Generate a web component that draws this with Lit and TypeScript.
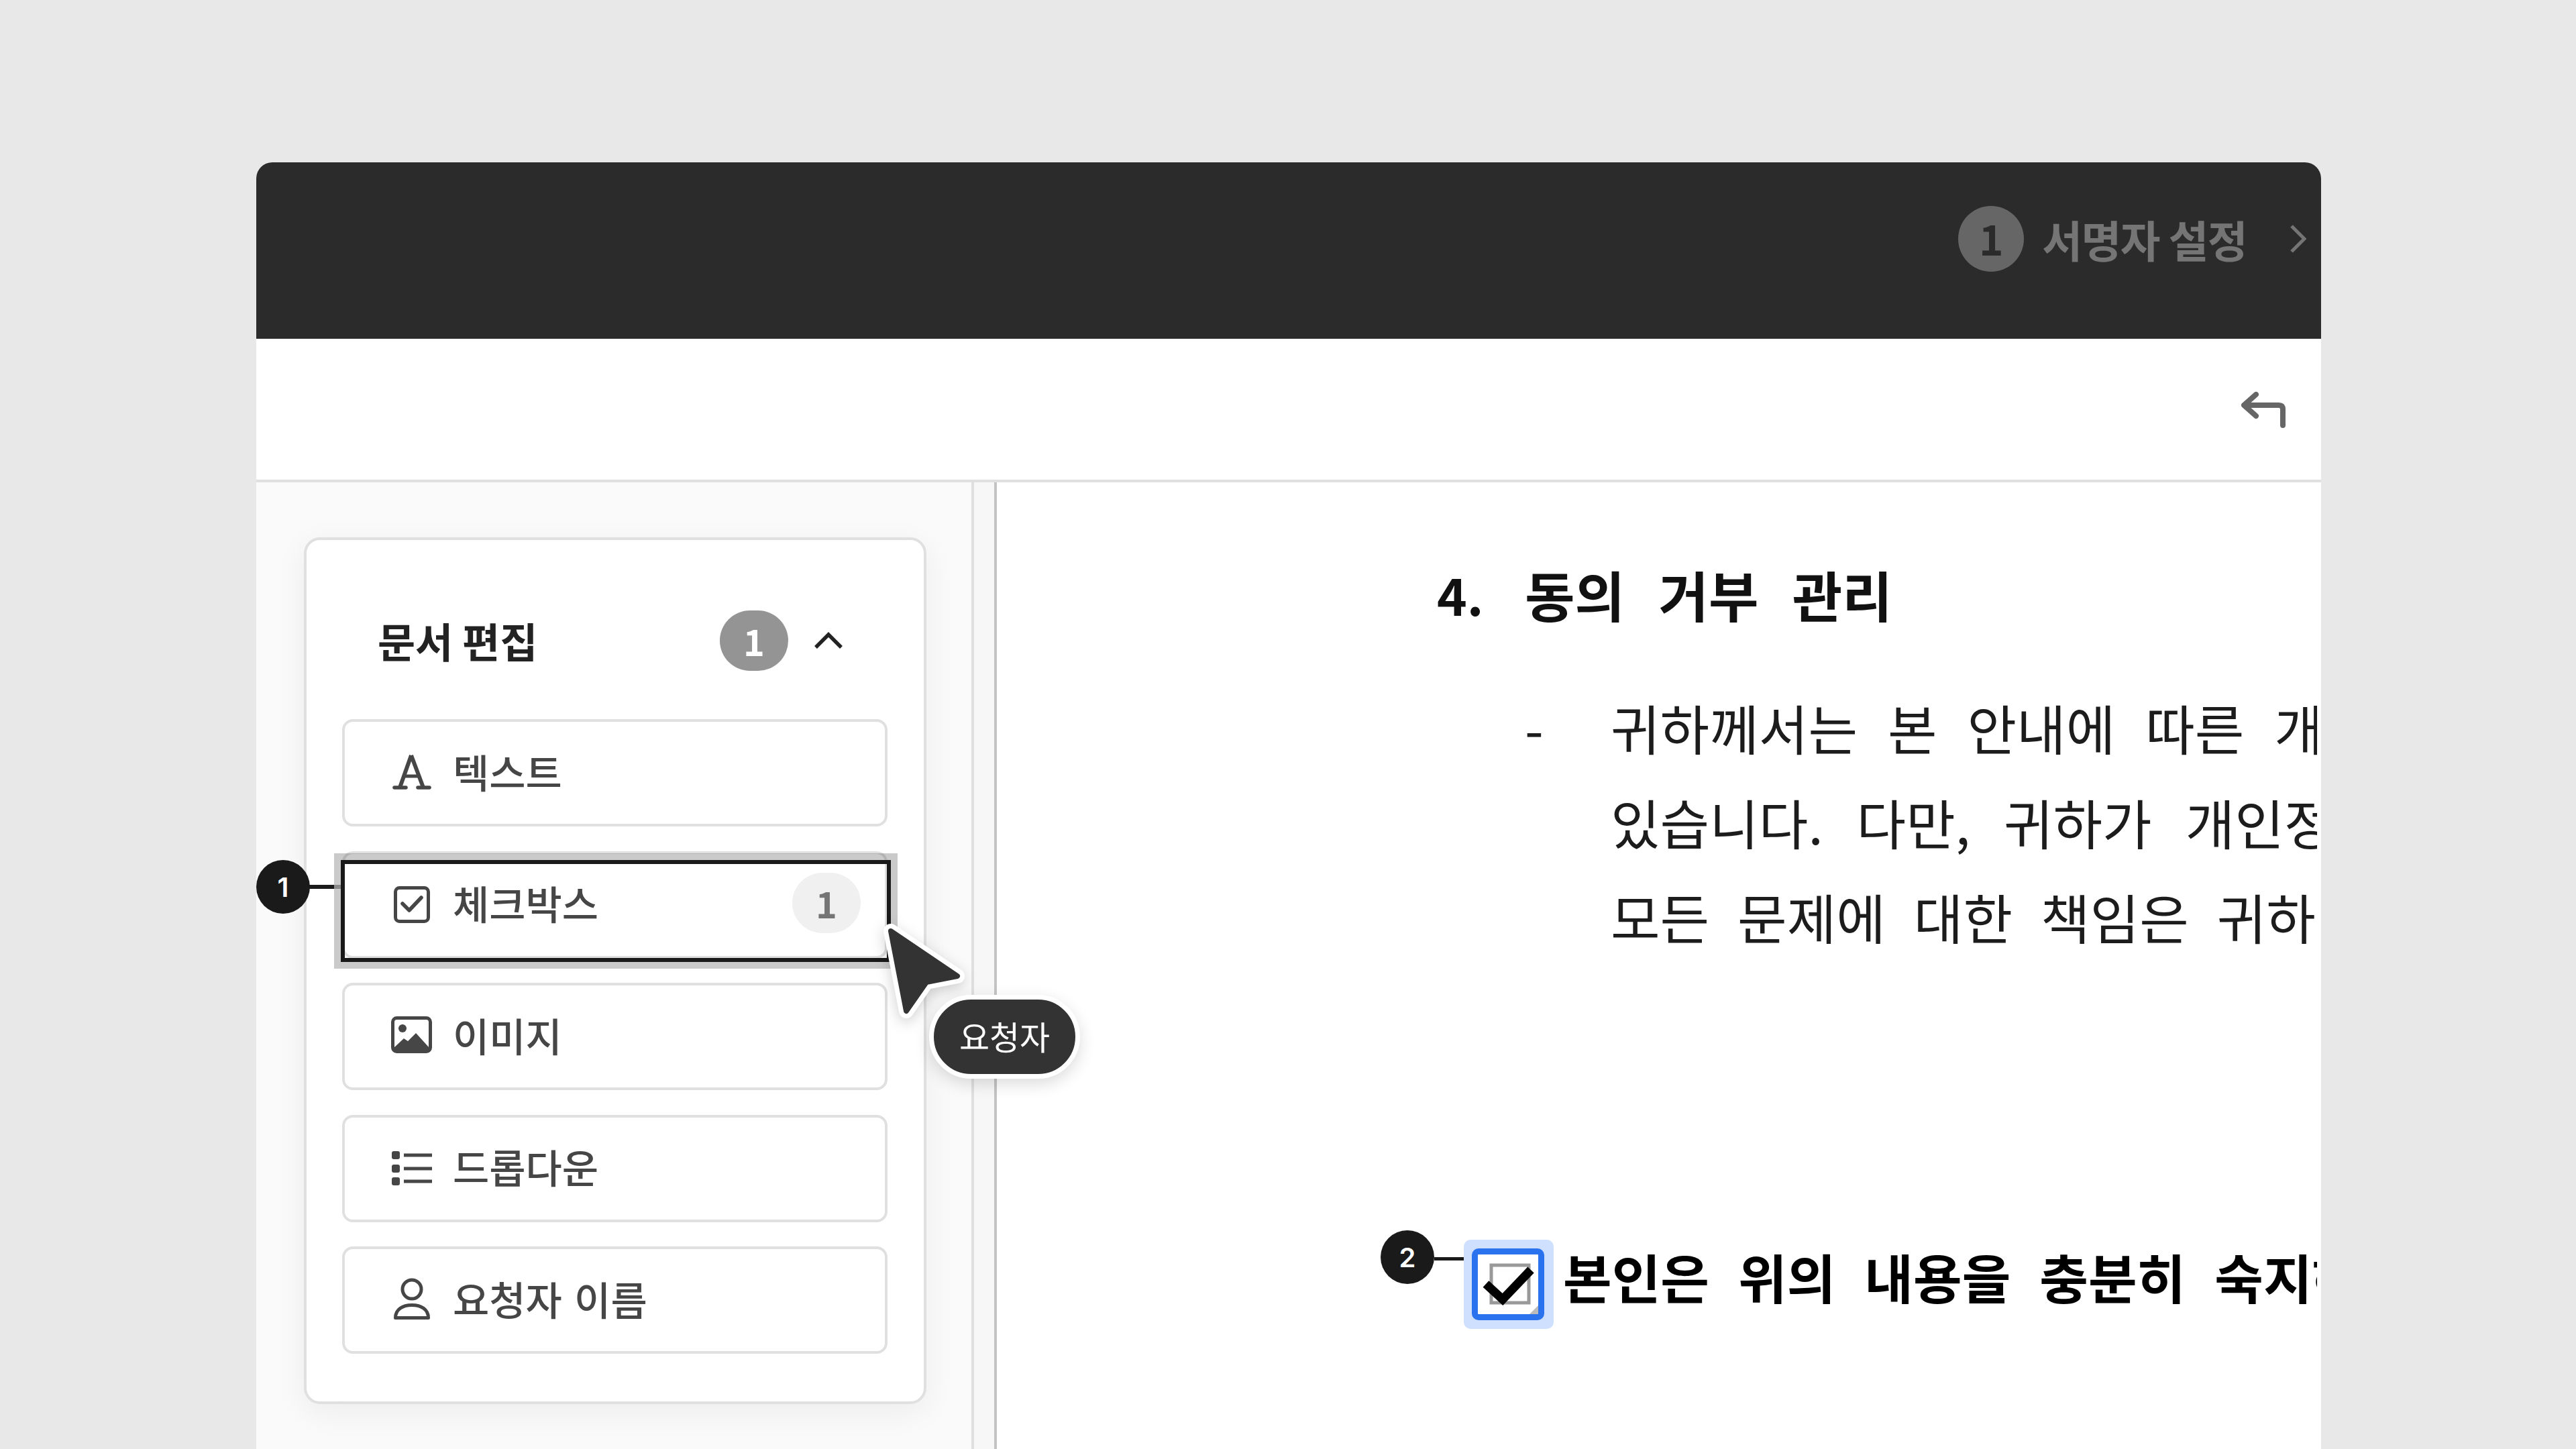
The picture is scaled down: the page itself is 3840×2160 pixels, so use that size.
import { LitElement, html, css, svg, unsafeCSS } from "lit";
import { customElement } from "lit/decorators.js";

const KR = unsafeCSS(`"Noto Sans CJK KR", "Noto Sans", sans-serif`);

const icons: Record<string, unknown> = {
  text: svg`<svg width="64" height="64" viewBox="0 0 64 64" fill="none" stroke="#464646"><path d="M31 8 L14 56 M31 8 L49 56" stroke-width="6"/><path d="M20 39 H43" stroke-width="5"/><path d="M6 56 H23 M41 56 H58" stroke-width="5.5" stroke-linecap="round"/></svg>`,
  check: svg`<svg width="64" height="64" viewBox="0 0 64 64" fill="none" stroke="#464646" stroke-width="5"><rect x="7.5" y="8.5" width="49" height="50" rx="6"/><path d="M18 32 L28 42 L46 23" stroke-width="5.5" stroke-linecap="round" stroke-linejoin="round"/></svg>`,
  image: svg`<svg width="64" height="64" viewBox="0 0 64 64" fill="none"><rect x="3.5" y="6.5" width="56" height="50" rx="6" stroke="#464646" stroke-width="5"/><circle cx="18" cy="22" r="6" fill="#464646"/><path d="M5 51 L20 37 L26 41 L38 29 L58 51 V58 H5 Z" fill="#464646"/></svg>`,
  list: svg`<svg width="64" height="64" viewBox="0 0 64 64" fill="none"><g fill="#464646"><rect x="2" y="8" width="12" height="12" rx="3"/><rect x="2" y="28" width="12" height="12" rx="3"/><rect x="2" y="47" width="12" height="12" rx="3"/></g><path d="M20 14 H62 M20 34 H62 M20 53 H62" stroke="#464646" stroke-width="5"/></svg>`,
  person: svg`<svg width="64" height="64" viewBox="0 0 64 64" fill="none" stroke="#464646" stroke-width="5"><circle cx="32" cy="18" r="14"/><path d="M7.5 60.5 C7.5 48 18 41.5 32 41.5 C46 41.5 56.5 48 56.5 60.5 Z" stroke-linejoin="round"/></svg>`,
};

@customElement("app-root")
export class AppRoot extends LitElement {
  static styles = css`
    :host { display: block; width: 3840px; height: 2160px; background: #e8e8e8; overflow: hidden; font-family: ${KR}; position: relative; }
    .window { position: relative; margin: 0 380px 0 382px; top: 242px; height: 1918px; display: flex; flex-direction: column; background: #fff; border-radius: 24px 24px 0 0; overflow: hidden; }
    .top { height: 263px; flex: none; background: #2b2b2b; display: flex; align-items: center; justify-content: flex-end; padding-right: 22px; box-sizing: border-box; }
    .step { display: flex; align-items: center; margin-top: -36px; }
    .step-num { width: 98px; height: 98px; box-sizing: border-box; padding-bottom: 3px; border-radius: 50%; background: #666; color: #2b2b2b; font-size: 62px; font-weight: 700; display: flex; align-items: center; justify-content: center; margin-right: 27px; }
    .step-label { color: #757575; font-size: 65px; font-weight: 700; letter-spacing: -1.5px; margin-right: 65px; white-space: nowrap; }
    .step svg { stroke: #757575; }
    .tool { height: 210px; flex: none; border-bottom: 4px solid #e0e0e0; display: flex; align-items: center; justify-content: flex-end; padding-right: 53px; box-sizing: content-box; }
    .tool svg { margin-top: 2px; }
    .body { flex: 1; display: flex; min-height: 0; }
    .side { width: 1070px; flex: none; background: #fafafa; padding: 82px 0 0 71px; box-sizing: border-box; border-right: 4px solid #e0e0e0; }
    .gutter { width: 30px; flex: none; background: #f7f7f7; border-right: 4px solid #c4c4c4; }
    .card { width: 928px; height: 1292px; box-sizing: border-box; background: #fff; border: 4px solid #e0e0e0; border-radius: 24px; box-shadow: 0 12px 48px rgba(0,0,0,.06); padding: 0 54px 0 53px; }
    .card-head { height: 267px; box-sizing: border-box; display: flex; align-items: center; padding: 32px 66px 0 53px; }
    .card-title { font-size: 61px; font-weight: 700; color: #222; flex: 1; white-space: nowrap; }
    .card-badge { width: 102px; height: 90px; border-radius: 45px; background: #949494; color: #fff; font-size: 54px; font-weight: 700; display: flex; align-items: center; justify-content: center; margin-right: 38px; }
    .rows { display: flex; flex-direction: column; gap: 36.5px; }
    .row { height: 160px; box-sizing: border-box; border: 4px solid #e0e0e0; border-radius: 16px; background: #fff; display: flex; align-items: center; padding: 0 36px 6px 68px; color: #464646; font-size: 59px; font-weight: 500; word-spacing: 5px; white-space: nowrap; }
    .row svg { flex: none; margin: 2px 29px 0 0; }
    .row .name { flex: 1; }
    .count { width: 102px; height: 90px; border-radius: 45px; background: #f0f0f0; color: #757575; font-size: 54px; font-weight: 700; display: flex; align-items: center; justify-content: center; }
    .doc { flex: 1; min-width: 0; overflow: hidden; background: #fff; margin-right: 6px; padding: 112px 0 0 656px; box-sizing: border-box; color: #111; white-space: nowrap; }
    .doc-head { font-size: 81px; line-height: 108px; font-weight: 700; word-spacing: 32px; display: flex; }
    .doc-head b { width: 131px; flex: none; font-weight: 700; font-size: 76px; }
    .para { display: flex; margin: 74px 0 0 131px; font-size: 80px; line-height: 141px; color: #1c1c1c; }
    .para .dash { width: 128px; flex: none; }
    .l1 { word-spacing: 27px; }
    .l2 { word-spacing: 32px; }
    .l3 { word-spacing: 24px; }
    .agree { margin: 417px 0 0 188px; font-size: 79px; line-height: 100px; font-weight: 700; word-spacing: 25px; color: #000; }

    .over { position: absolute; }
    .dot { width: 80px; height: 80px; border-radius: 50%; background: #1a1a1a; color: #fff; font-family: Inter, sans-serif; font-size: 40px; font-weight: 600; display: flex; align-items: center; justify-content: center; }
    .dot1 { left: 0; top: 1040px; }
    .dot2 { left: 1676px; top: 1592px; }
    .leader { height: 6px; background: #1a1a1a; }
    .lead1 { left: 79px; top: 1077px; width: 37px; }
    .lead1b { left: 116px; top: 1077px; width: 10px; background: #8a8a8a; }
    .lead2 { left: 1756px; top: 1632px; width: 46px; height: 5px; }
    .hl { left: 126px; top: 1040px; width: 820px; height: 152px; box-sizing: border-box; border: 6px solid #1a1a1a; outline: 10px solid rgba(60,60,60,.27); }
    .cursor { left: 930px; top: 1125px; overflow: visible; filter: drop-shadow(0 6px 10px rgba(0,0,0,.18)); }
    .tip { left: 1003px; top: 1241px; width: 225px; height: 125px; box-sizing: border-box; padding-bottom: 4px; border: 7px solid #fff; border-radius: 63px; background: #333; color: #fff; font-size: 49px; font-weight: 400; display: flex; align-items: center; justify-content: center; box-shadow: 0 8px 24px rgba(0,0,0,.14); white-space: nowrap; }
    .cb-halo { left: 1800px; top: 1606px; width: 134px; height: 133px; border-radius: 10px; background: #cfe0ff; }
    .cb-box { left: 1812px; top: 1619px; width: 108px; height: 107px; box-sizing: border-box; border: 9px solid #2b72ee; border-radius: 10px; background: #fff; }
    .cb-svg { left: 1812px; top: 1619px; }
  `;

  private row(icon: string, name: string, count?: string) {
    return html`<div class="row">${icons[icon]}<span class="name">${name}</span>${count ? html`<span class="count">${count}</span>` : ""}</div>`;
  }

  render() {
    return html`
      <div class="window">
        <div class="top">
          <div class="step">
            <span class="step-num">1</span>
            <span class="step-label">서명자 설정</span>
            <svg width="24" height="42" viewBox="0 0 24 42" fill="none"><path d="M2 2 L21 21 L2 40" stroke-width="5"/></svg>
          </div>
        </div>
        <div class="tool">
          <svg width="66" height="54" viewBox="0 0 66 54" fill="none" stroke="#666" stroke-width="8" stroke-linecap="round" stroke-linejoin="round"><path d="M22 4 L4 20 L22 36"/><path d="M5 20 H56 Q62 20 62 26 V50"/></svg>
        </div>
        <div class="body">
          <div class="side">
            <div class="card">
              <div class="card-head">
                <span class="card-title">문서 편집</span>
                <span class="card-badge">1</span>
                <svg width="44" height="26" viewBox="0 0 44 26" fill="none"><path d="M3 23 L22 4 L41 23" stroke="#222" stroke-width="5.5"/></svg>
              </div>
              <div class="rows">
                ${this.row("text", "텍스트")}
                ${this.row("check", "체크박스", "1")}
                ${this.row("image", "이미지")}
                ${this.row("list", "드롭다운")}
                ${this.row("person", "요청자 이름")}
              </div>
            </div>
          </div>
          <div class="gutter"></div>
          <div class="doc">
            <div class="doc-head"><b>4.</b><span>동의 거부 관리</span></div>
            <div class="para"><span class="dash">-</span><div><div class="l1">귀하께서는 본 안내에 따른 개인정보 수집 및 이용에 대한</div><div class="l2">있습니다. 다만, 귀하가 개인정보 제공에 동의하지 않아 발생하는</div><div class="l3">모든 문제에 대한 책임은 귀하에게 있습니다</div></div></div>
            <div class="agree">본인은 위의 내용을 충분히 숙지하였으며 이에 동의합니다</div>
          </div>
        </div>

        <div class="over leader lead1"></div>
        <div class="over hl"></div>
        <div class="over leader lead1b"></div>
        <div class="over dot dot1">1</div>
        <svg class="over cursor" width="130" height="150" viewBox="0 0 130 150"><path d="M16 21 L115 88 L69 97 L39 140 Z" fill="#333" stroke="#fff" stroke-width="22" stroke-linejoin="round"/><path d="M16 21 L115 88 L69 97 L39 140 Z" fill="#333" stroke="#333" stroke-width="8" stroke-linejoin="round"/></svg>
        <div class="over tip">요청자</div>

        <div class="over dot dot2">2</div>
        <div class="over leader lead2"></div>
        <div class="over cb-halo"></div>
        <div class="over cb-box"></div>
        <svg class="over cb-svg" width="108" height="107" viewBox="0 0 108 107" fill="none">
          <rect x="29" y="25" width="56" height="56" stroke="#999" stroke-width="5"/>
          <path d="M86 98 L99 98 L99 85 Z" fill="#bbb"/>
          <path d="M21 53 L46 76 L88 32" stroke="#000" stroke-width="13"/>
        </svg>
      </div>
    `;
  }
}
